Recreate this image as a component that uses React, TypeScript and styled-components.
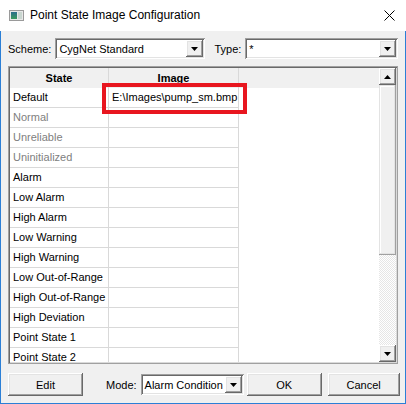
import styled, { createGlobalStyle, css } from "styled-components";

const GlobalStyle = createGlobalStyle`
  html, body {
    margin: 0;
    padding: 0;
    background: #ffffff;
  }
  body {
    font-family: "Liberation Sans", Tahoma, Arial, sans-serif;
    font-size: 11px;
    color: #000;
  }
`;

const raised = css`
  background: #f0f0f0;
  box-shadow: inset -1px -1px #696969, inset 1px 1px #ffffff,
    inset -2px -2px #a0a0a0, inset 2px 2px #e3e3e3;
`;

const sunken = css`
  box-shadow: inset 1px 1px #a0a0a0, inset -1px -1px #ffffff,
    inset 2px 2px #696969, inset -2px -2px #e3e3e3;
`;

const rows = [
  { label: "Default", dim: false, image: "E:\\Images\\pump_sm.bmp" },
  { label: "Normal", dim: true },
  { label: "Unreliable", dim: true },
  { label: "Uninitialized", dim: true },
  { label: "Alarm", dim: false },
  { label: "Low Alarm", dim: false },
  { label: "High Alarm", dim: false },
  { label: "Low Warning", dim: false },
  { label: "High Warning", dim: false },
  { label: "Low Out-of-Range", dim: false },
  { label: "High Out-of-Range", dim: false },
  { label: "High Deviation", dim: false },
  { label: "Point State 1", dim: false },
  { label: "Point State 2", dim: false },
];

function Arrow({ up }: { up?: boolean }) {
  return (
    <svg width="7" height="4" viewBox="0 0 7 4">
      {up ? (
        <polygon points="0,4 7,4 3.5,0" fill="#000" />
      ) : (
        <polygon points="0,0 7,0 3.5,4" fill="#000" />
      )}
    </svg>
  );
}

function ComboBox({ value, width }: { value: string; width?: number }) {
  return (
    <Combo $width={width}>
      <ComboText>{value}</ComboText>
      <DropButton>
        <Arrow />
      </DropButton>
    </Combo>
  );
}

export default function App() {
  return (
    <>
      <GlobalStyle />
      <Window>
        <TitleBar>
          <svg width="15" height="11" viewBox="0 0 15 11">
            <defs>
              <linearGradient id="tg" x1="0" y1="0" x2="0" y2="1">
                <stop offset="0" stopColor="#2c6e8c" />
                <stop offset="1" stopColor="#3a9a5c" />
              </linearGradient>
            </defs>
            <rect x="0.5" y="0.5" width="14" height="10" fill="#e8e8e8" stroke="#9a9a9a" />
            <rect x="2" y="2" width="6" height="7" fill="url(#tg)" />
            <rect x="9" y="2" width="4" height="7" fill="#c9d6d0" />
          </svg>
          <TitleText>Point State Image Configuration</TitleText>
          <CloseButton>
            <svg width="11" height="11" viewBox="0 0 11 11">
              <path d="M0.5 0.5 L10.5 10.5 M10.5 0.5 L0.5 10.5" stroke="#000" strokeWidth="1" />
            </svg>
          </CloseButton>
        </TitleBar>
        <Body>
          <TopRow>
            <Label>Scheme:</Label>
            <ComboBox value="CygNet Standard" width={150} />
            <Label $gap={9}>Type:</Label>
            <ComboBox value="*" />
          </TopRow>
          <GridFrame>
            <GridContent>
              <HeaderRow>
                <HeaderCell $line>State</HeaderCell>
                <HeaderCell $line>Image</HeaderCell>
                <HeaderCell />
              </HeaderRow>
              <RowList>
                {rows.map((r) => (
                  <Row key={r.label}>
                    <Cell $dim={r.dim} $line>
                      {r.label}
                    </Cell>
                    <Cell $line>{r.image}</Cell>
                    <Filler />
                  </Row>
                ))}
              </RowList>
            </GridContent>
            <ScrollBar>
              <ScrollButton>
                <Arrow up />
              </ScrollButton>
              <Track>
                <Thumb />
              </Track>
              <ScrollButton>
                <Arrow />
              </ScrollButton>
            </ScrollBar>
            <Highlight />
          </GridFrame>
          <BottomRow>
            <Button $width={75}>Edit</Button>
            <Label $gap={23}>Mode:</Label>
            <ComboBox value="Alarm Condition" width={103} />
            <Button $width={75} $gap={3}>OK</Button>
            <Button $width={72} $gap={6}>Cancel</Button>
          </BottomRow>
        </Body>
      </Window>
    </>
  );
}

const Window = styled.div`
  width: 406px;
  height: 404px;
  display: flex;
  flex-direction: column;
`;

const TitleBar = styled.div`
  height: 31px;
  flex-shrink: 0;
  background: #ffffff;
  display: flex;
  align-items: center;
  padding-left: 9px;
  box-sizing: border-box;
  svg {
    display: block;
  }
`;

const TitleText = styled.div`
  margin-left: 6px;
  font-family: "Segoe UI", "Liberation Sans", Arial, sans-serif;
  font-size: 12px;
  color: #000;
  flex: 1;
  padding-bottom: 1px;
`;

const CloseButton = styled.div`
  width: 46px;
  height: 31px;
  display: flex;
  align-items: center;
  justify-content: center;
  padding-left: 12px;
  box-sizing: border-box;
`;

const Body = styled.div`
  flex: 1;
  background: #f0f0f0;
  border: 1px solid #2b7fd6;
  border-top: none;
  padding: 7px 7px 7px 7px;
  display: flex;
  flex-direction: column;
  gap: 7px;
  box-sizing: border-box;
`;

const TopRow = styled.div`
  display: flex;
  align-items: center;
  height: 21px;
`;

const Label = styled.span<{ $gap?: number }>`
  margin-left: ${({ $gap }) => $gap ?? 0}px;
  margin-right: 4px;
  white-space: nowrap;
`;

const Combo = styled.div<{ $width?: number }>`
  ${sunken};
  background: #ffffff;
  height: 21px;
  box-sizing: border-box;
  padding: 2px;
  display: flex;
  align-items: center;
  ${({ $width }) => ($width ? `width: ${$width}px; flex-shrink: 0;` : "flex: 1;")}
`;

const ComboText = styled.span`
  flex: 1;
  padding-left: 2px;
  white-space: nowrap;
  overflow: hidden;
`;

const DropButton = styled.div`
  ${raised};
  width: 17px;
  height: 17px;
  display: flex;
  align-items: center;
  justify-content: center;
  svg {
    display: block;
  }
`;

const GridFrame = styled.div`
  position: relative;
  box-shadow: inset 1px 1px #a0a0a0, inset -1px -1px #a0a0a0,
    inset 2px 2px #696969, inset -2px -2px #dadada;
  height: 298px;
  padding: 2px;
  box-sizing: border-box;
  display: flex;
  background: #ffffff;
`;

const GridContent = styled.div`
  flex: 1;
  display: flex;
  flex-direction: column;
  overflow: hidden;
`;

const columns = "99px 130px 1fr";

const HeaderRow = styled.div`
  display: grid;
  grid-template-columns: ${columns};
  height: 20px;
  background: #f0f0f0;
  flex-shrink: 0;
`;

const HeaderCell = styled.div<{ $line?: boolean }>`
  font-weight: bold;
  text-align: center;
  line-height: 20px;
  ${({ $line }) => ($line ? "border-right: 1px solid #d9d9d9;" : "")}
`;

const RowList = styled.div`
  flex: 1;
  overflow: hidden;
`;

const Row = styled.div`
  display: grid;
  grid-template-columns: ${columns};
  height: 20px;
`;

const Cell = styled.div<{ $dim?: boolean; $line?: boolean }>`
  padding-left: 3px;
  line-height: 19px;
  white-space: nowrap;
  color: ${({ $dim }) => ($dim ? "#808080" : "#000")};
  border-bottom: 1px solid #d9d9d9;
  ${({ $line }) => ($line ? "border-right: 1px solid #d9d9d9;" : "")}
`;

const Filler = styled.div``;

const ScrollBar = styled.div`
  width: 17px;
  display: flex;
  flex-direction: column;
  flex-shrink: 0;
`;

const ScrollButton = styled.div`
  ${raised};
  height: 17px;
  flex-shrink: 0;
  display: flex;
  align-items: center;
  justify-content: center;
  svg {
    display: block;
  }
`;

const Track = styled.div`
  flex: 1;
  background: repeating-conic-gradient(#ffffff 0 25%, #e6e6e6 0 50%) 0 0 / 2px 2px;
`;

const Thumb = styled.div`
  ${raised};
  box-shadow: inset -1px -1px #a0a0a0, inset 1px 1px #e3e3e3,
    inset -2px -2px #e3e3e3, inset 2px 2px #ffffff;
  height: 170px;
`;

const Highlight = styled.div`
  position: absolute;
  left: 94px;
  top: 17px;
  width: 145px;
  height: 31px;
  border: 4px solid #e8161f;
  box-sizing: border-box;
  pointer-events: none;
`;

const BottomRow = styled.div`
  display: flex;
  align-items: center;
  height: 23px;
  margin-top: 2px;
`;

const Button = styled.div<{ $width: number; $gap?: number }>`
  ${raised};
  width: ${({ $width }) => $width}px;
  margin-left: ${({ $gap }) => $gap ?? 0}px;
  height: 23px;
  display: flex;
  align-items: center;
  justify-content: center;
  box-sizing: border-box;
  flex-shrink: 0;
`;
